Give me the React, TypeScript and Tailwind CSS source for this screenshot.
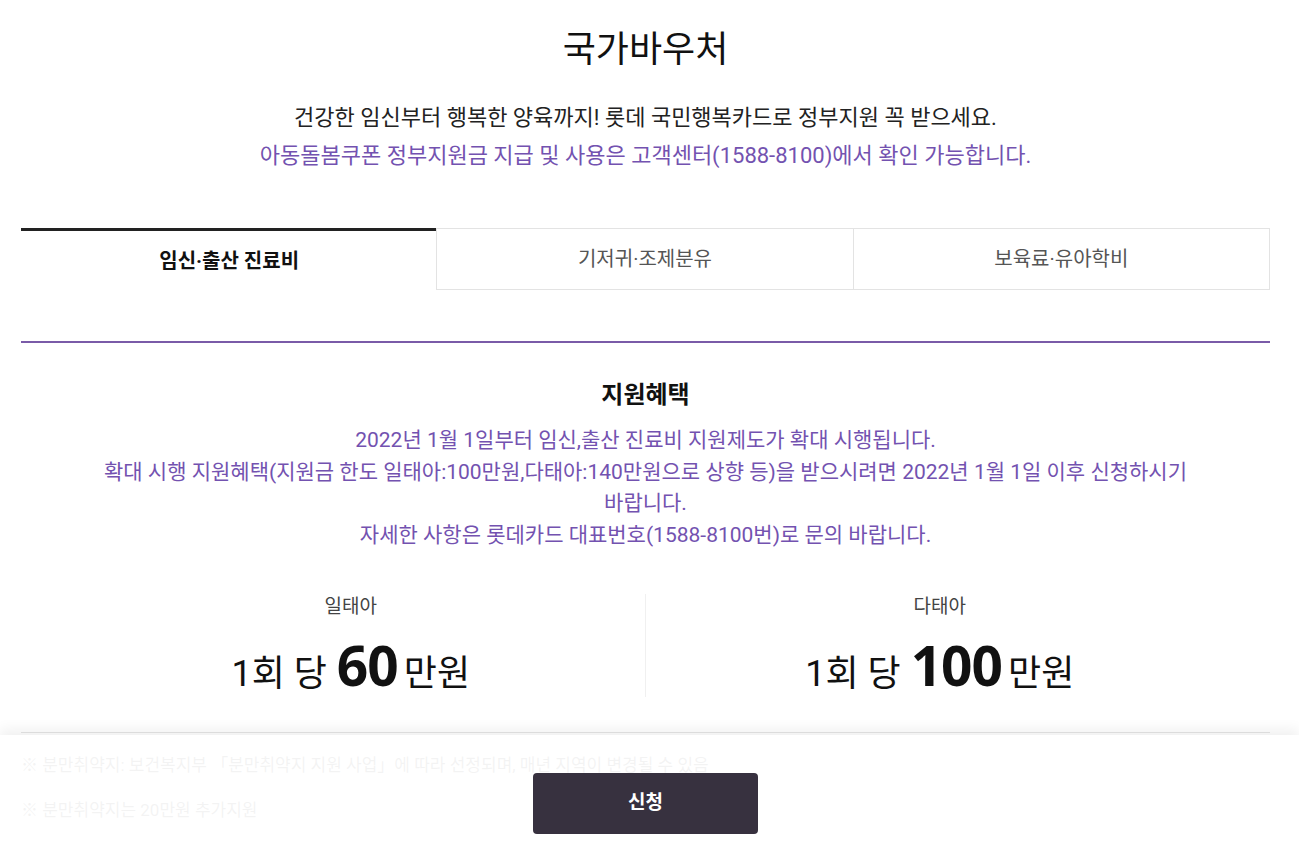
import React from "react";

const tabs = ["임신·출산 진료비", "기저귀·조제분유", "보육료·유아학비"];

export default function App() {
  const active = 0;
  return (
    <div className="min-h-screen bg-white text-[#111] font-['Roboto','Noto_Sans_CJK_KR',sans-serif] break-keep">
      <div className="ml-[21px] w-[1249px] pb-[140px]">
        {/* Header */}
        <div className="pt-[28px] text-center">
          <h1 className="text-[36px] leading-[44px] font-normal text-[#111]">국가바우처</h1>
          <p className="mt-[27px] text-[22px] leading-[38px] text-[#222]">
            건강한 임신부터 행복한 양육까지! 롯데 국민행복카드로 정부지원 꼭 받으세요.
          </p>
          <p className="text-[22px] leading-[38px] text-[#7352b0]">
            아동돌봄쿠폰 정부지원금 지급 및 사용은 고객센터(1588-8100)에서 확인 가능합니다.
          </p>
        </div>

        {/* Tabs */}
        <div className="mt-[53px] grid grid-cols-3">
          {tabs.map((t, i) => (
            <div
              key={t}
              className={
                i === active
                  ? "h-[62px] flex items-center justify-center border-t-[3px] border-[#222] text-[20px] font-bold text-[#111]"
                  : "h-[62px] flex items-center justify-center border border-[#e3e3e3] -ml-px text-[20px] text-[#555]"
              }
            >
              {t}
            </div>
          ))}
        </div>

        <div className="mt-[51px] h-[2px] bg-[#7a5ba8]" />

        {/* Benefit */}
        <div className="mt-[36px] text-center">
          <h2 className="text-[24px] leading-[32px] font-bold text-[#111]">지원혜택</h2>
          <div className="mx-auto mt-[14px] max-w-[1110px] text-[21px] leading-[31.6px] text-[#7352b0]">
            <p>2022년 1월 1일부터 임신,출산 진료비 지원제도가 확대 시행됩니다.</p>
            <p>
              확대 시행 지원혜택(지원금 한도 일태아:100만원,다태아:140만원으로 상향 등)을 받으시려면 2022년 1월 1일 이후 신청하시기 바랍니다.
            </p>
            <p>자세한 사항은 롯데카드 대표번호(1588-8100번)로 문의 바랍니다.</p>
          </div>
        </div>

        {/* Amounts */}
        <div className="mt-[43px] px-[36px] grid grid-cols-2">
          {[
            { label: "일태아", amount: "60" },
            { label: "다태아", amount: "100" },
          ].map((a, i) => (
            <div
              key={a.label}
              className={
                i === 0
                  ? "flex flex-col items-center border-r border-[#f0f0f0] h-[103px]"
                  : "flex flex-col items-center h-[103px]"
              }
            >
              <p className="text-[19px] leading-[26px] text-[#444]">{a.label}</p>
              <p className="mt-[17px] flex items-baseline text-[#111]">
                <span className="text-[36px] leading-[56px]">1회 당</span>
                <span className="ml-[10px] mr-[6px] text-[55px] leading-[56px] font-bold font-['Noto_Sans','Roboto',sans-serif] tracking-[-1px]">
                  {a.amount}
                </span>
                <span className="text-[36px] leading-[56px]">만원</span>
              </p>
            </div>
          ))}
        </div>

        {/* Notes */}
        <div className="mt-[35px] border-t border-[#e5e5e5] pt-[18px] text-[17px] text-[#888]">
          <p className="leading-[28px]">※ 분만취약지: 보건복지부 「분만취약지 지원 사업」에 따라 선정되며, 매년 지역이 변경될 수 있음</p>
          <p className="mt-[17px] leading-[28px]">※ 분만취약지는 20만원 추가지원</p>
        </div>
      </div>

      {/* Fixed apply bar */}
      <div className="fixed bottom-0 left-0 right-0 h-[116px] bg-white/90 shadow-[0_-6px_12px_rgba(0,0,0,0.06)] flex justify-center pt-[38px] pr-[8px]">
        <button className="w-[225px] h-[61px] rounded-[4px] bg-[#37313f] text-white text-[19px] font-bold">
          신청
        </button>
      </div>
    </div>
  );
}
